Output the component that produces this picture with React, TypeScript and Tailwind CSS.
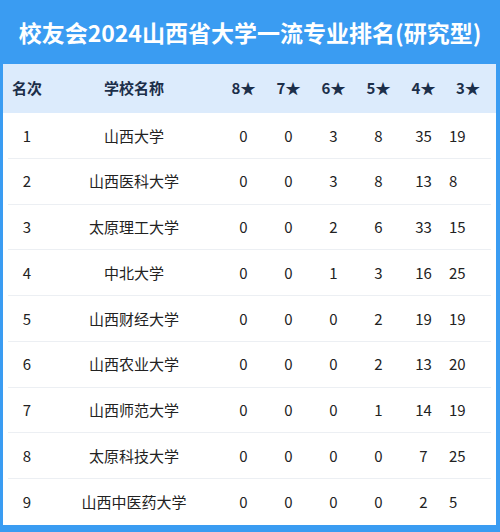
const rows = [
  { rank: 1, name: "山西大学", v: [0, 0, 3, 8, 35, 19] },
  { rank: 2, name: "山西医科大学", v: [0, 0, 3, 8, 13, 8] },
  { rank: 3, name: "太原理工大学", v: [0, 0, 2, 6, 33, 15] },
  { rank: 4, name: "中北大学", v: [0, 0, 1, 3, 16, 25] },
  { rank: 5, name: "山西财经大学", v: [0, 0, 0, 2, 19, 19] },
  { rank: 6, name: "山西农业大学", v: [0, 0, 0, 2, 13, 20] },
  { rank: 7, name: "山西师范大学", v: [0, 0, 0, 1, 14, 19] },
  { rank: 8, name: "太原科技大学", v: [0, 0, 0, 0, 7, 25] },
  { rank: 9, name: "山西中医药大学", v: [0, 0, 0, 0, 2, 5] },
]

const grid = "grid grid-cols-[48px_170px_45px_45px_45px_45px_45px_1fr] items-center"

export default function App() {
  return (
    <div className="w-[500px] h-[532px] bg-[#3a9cf2] flex flex-col font-['Noto_Sans_CJK_SC','Noto_Sans',sans-serif]">
      <div className="h-[64px] flex items-center justify-center">
        <h1 className="text-white text-[23px] font-bold tracking-[0px] leading-none">
          校友会2024山西省大学一流专业排名(研究型)
        </h1>
      </div>

      <div className="ml-[3px] mr-[4px] h-[461px] bg-white">
        <div className={`${grid} h-[49px] bg-[#dcebfc] text-[15px] font-bold text-[#1c2f4a]`}>
          <span className="text-center">名次</span>
          <span className="text-center pr-[4px]">学校名称</span>
          <span className="text-center">8★</span>
          <span className="text-center">7★</span>
          <span className="text-center">6★</span>
          <span className="text-center">5★</span>
          <span className="text-center">4★</span>
          <span className="text-center pr-[6px]">3★</span>
        </div>

        {rows.map((r, i) => (
          <div key={r.rank} className="px-[5px]">
            <div
              className={`${grid} -mx-[5px] h-[45.75px] text-[15px] text-[#222]`}
            >
              <span className="text-center">{r.rank}</span>
              <span className="text-center pr-[4px]">{r.name}</span>
              {r.v.slice(0, 5).map((n, j) => (
                <span key={j} className="text-center">{n}</span>
              ))}
              <span className="pl-[3px]">{r.v[5]}</span>
            </div>
            {i < rows.length - 1 && <div className="h-px bg-[#eceff3] -mt-px" />}
          </div>
        ))}
      </div>
    </div>
  )
}
